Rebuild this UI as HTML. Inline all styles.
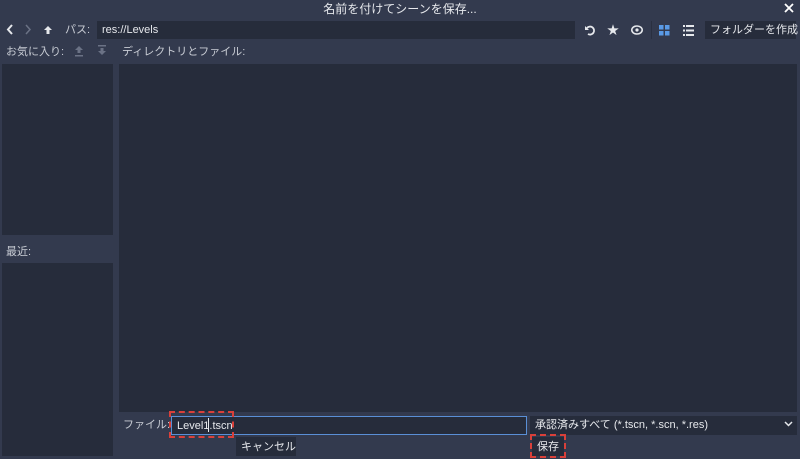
<!DOCTYPE html>
<html><head><meta charset="utf-8"><style>
*{margin:0;padding:0;box-sizing:border-box}
body{width:800px;height:459px;background:#333a4e;font-family:"Liberation Sans","Noto Sans CJK JP",sans-serif;font-size:11px;color:#d6d9e0;position:relative;overflow:hidden}
.a{position:absolute}
.p{background:#262c3b}
.t{white-space:nowrap;line-height:14px}
.dash{border:2px dashed #d9403a}
</style></head><body>
<div class="a t" style="left:0;width:800px;top:2px;text-align:center;font-size:12px;color:#e6e8ec">名前を付けてシーンを保存...</div>
<svg class="a" style="left:784px;top:3px" width="10" height="10" viewBox="0 0 10 10"><path d="M1 1L9 9M9 1L1 9" stroke="#fff" stroke-width="1.8"/></svg>

<svg class="a" style="left:6px;top:24px" width="8" height="11" viewBox="0 0 8 11"><path d="M6 1L2 5.5 6 10" fill="none" stroke="#e6e8ec" stroke-width="2"/></svg>
<svg class="a" style="left:24px;top:24px" width="8" height="11" viewBox="0 0 8 11"><path d="M2 1L6 5.5 2 10" fill="none" stroke="#6b7285" stroke-width="1.5"/></svg>
<svg class="a" style="left:43px;top:25px" width="10" height="10" viewBox="0 0 10 10"><path d="M5 1L1 5h2.5v4h3V5H9z" fill="#e6e8ec"/></svg>
<div class="a t" style="left:65px;top:23px;color:#c8ccd4">パス:</div>
<div class="a p" style="left:97px;top:21px;width:478px;height:18px"></div>
<div class="a t" style="left:102px;top:23px;color:#e6e8ec">res://Levels</div>

<svg class="a" style="left:584px;top:24px" width="12" height="12" viewBox="0 0 12 12"><path d="M3 4a4 4 0 1 1 1 6" fill="none" stroke="#e6e8ec" stroke-width="1.8"/><path d="M1 2v4h4z" fill="#e6e8ec"/></svg>
<div class="a t" style="left:607px;top:23px;font-size:12px;color:#e6e8ec">★</div>
<svg class="a" style="left:631px;top:25px" width="12" height="10" viewBox="0 0 12 10"><ellipse cx="6" cy="5" rx="5.2" ry="4" fill="none" stroke="#e6e8ec" stroke-width="1.6"/><circle cx="6" cy="5" r="1.6" fill="#e6e8ec"/></svg>
<div class="a" style="left:651px;top:21px;width:1px;height:18px;background:#2a3040"></div>
<svg class="a" style="left:659px;top:25px" width="11" height="11"><rect x="0" y="0" width="4.5" height="4.5" fill="#5a9ae6"/><rect x="6" y="0" width="4.5" height="4.5" fill="#5a9ae6"/><rect x="0" y="6" width="4.5" height="4.5" fill="#5a9ae6"/><rect x="6" y="6" width="4.5" height="4.5" fill="#5a9ae6"/></svg>
<svg class="a" style="left:683px;top:25px" width="11" height="11"><g fill="#e6e8ec"><rect x="0" y="0" width="2" height="2"/><rect x="3" y="0" width="8" height="2"/><rect x="0" y="4.5" width="2" height="2"/><rect x="3" y="4.5" width="8" height="2"/><rect x="0" y="9" width="2" height="2"/><rect x="3" y="9" width="8" height="2"/></g></svg>
<div class="a p" style="left:705px;top:21px;width:91px;height:18px"></div>
<div class="a t" style="left:710px;top:23px;color:#e6e8ec">フォルダーを作成</div>

<div class="a t" style="left:6px;top:45px;color:#c8ccd4">お気に入り:</div>
<svg class="a" style="left:74px;top:45px" width="10" height="12" viewBox="0 0 10 12"><path d="M5 1L1 5h2.5v3h3V5H9zM1 10h8v1.5H1z" fill="#6b7285"/></svg>
<svg class="a" style="left:97px;top:45px" width="10" height="12" viewBox="0 0 10 12"><path d="M1 0h8v1.5H1zM3.5 3h3v3H9L5 10 1 6h2.5z" fill="#6b7285"/></svg>
<div class="a t" style="left:122px;top:45px;color:#c8ccd4">ディレクトリとファイル:</div>

<div class="a p" style="left:2px;top:64px;width:111px;height:171px"></div>
<div class="a t" style="left:6px;top:245px;color:#c8ccd4">最近:</div>
<div class="a p" style="left:2px;top:263px;width:111px;height:193px"></div>
<div class="a p" style="left:119px;top:64px;width:678px;height:348px"></div>

<div class="a t" style="left:123px;top:418px;color:#c8ccd4">ファイル:</div>
<div class="a p" style="left:171px;top:416px;width:356px;height:19px;border:1px solid #5a8fd6"></div>
<div class="a t" style="left:177px;top:419px;color:#e6e8ec">Level1.tscn</div>
<div class="a" style="left:208px;top:418px;width:1px;height:14px;background:#e6e8ec"></div>
<div class="a p" style="left:530px;top:416px;width:267px;height:19px"></div>
<div class="a t" style="left:535px;top:418px;color:#e6e8ec">承認済みすべて (*.tscn, *.scn, *.res)</div>
<svg class="a" style="left:784px;top:421px" width="9" height="6" viewBox="0 0 9 6"><path d="M1 1l3.5 3.5L8 1" fill="none" stroke="#e6e8ec" stroke-width="1.5"/></svg>

<div class="a p" style="left:236px;top:437px;width:60px;height:19px"></div>
<div class="a t" style="left:241px;top:440px;color:#e6e8ec">キャンセル</div>
<div class="a p" style="left:532px;top:437px;width:32px;height:19px"></div>
<div class="a t" style="left:537px;top:440px;color:#e6e8ec">保存</div>

<div class="a dash" style="left:169px;top:411px;width:65px;height:27px"></div>
<div class="a dash" style="left:530px;top:434px;width:36px;height:24px"></div>
</body></html>
